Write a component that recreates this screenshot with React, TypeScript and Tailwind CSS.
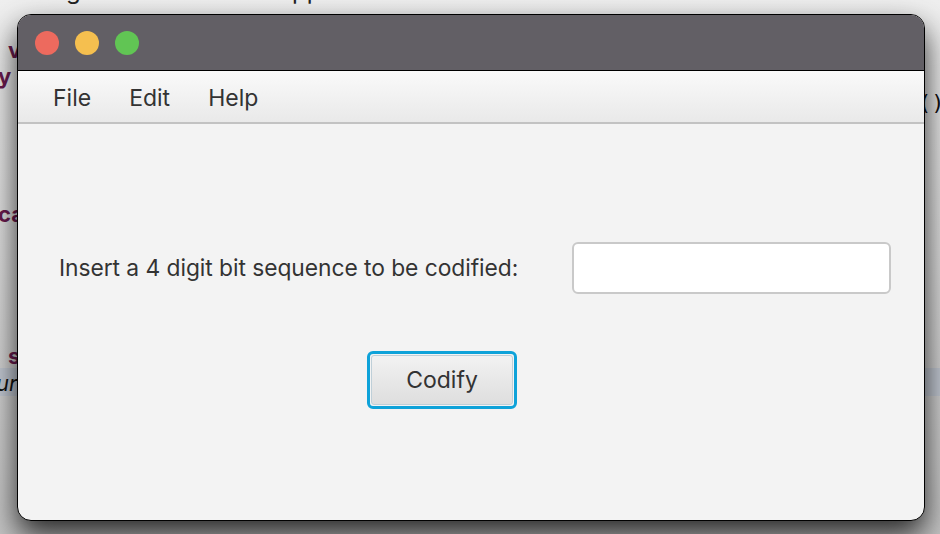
import React from 'react';

const font = { fontFamily: 'Inter, "Noto Sans", sans-serif' };

export default function App() {
  return (
    <div
      className="relative w-[940px] h-[534px] overflow-hidden bg-gradient-to-b from-[#efefef] via-[#dcdcdc] to-[#c4c4c4]"
      style={font}
    >
      {/* Text of the window behind */}
      <div className="absolute left-[66px] top-[-24px] text-[24px] leading-[30px] text-[#222]">g</div>
      <div className="absolute left-[292px] top-[-24px] text-[24px] leading-[30px] text-[#222]">pp</div>
      <div className="absolute left-[8px] top-[34px] text-[22px] font-bold text-[#6a1a4e]">v</div>
      <div className="absolute left-[-2px] top-[60px] text-[22px] font-bold text-[#6a1a4e]">y</div>
      <div className="absolute left-[-2px] top-[198px] text-[22px] font-bold text-[#6a1a4e]">ca</div>
      <div className="absolute left-[8px] top-[340px] text-[22px] font-bold text-[#6a1a4e]">s</div>
      <div className="absolute left-0 top-[368px] w-[940px] h-[28px] bg-[#c3c9d3]" />
      <div className="absolute left-[-4px] top-[367px] text-[22px] italic text-[#111]">ur</div>
      <div className="absolute left-[918px] top-[86px] text-[22px] text-[#111]" style={{ fontFamily: '"DejaVu Sans Mono", monospace' }}>()</div>

      {/* App window */}
      <div className="absolute left-[17px] top-[14px] w-[908px] h-[507px] rounded-[14px] border border-black bg-[#f3f3f3] overflow-hidden flex flex-col shadow-[0_14px_30px_rgba(0,0,0,0.8)]">
        <div className="h-[56px] bg-[#625f65] border-b border-black flex items-center gap-[16px] pl-[17px] shrink-0">
          <span className="w-[24px] h-[24px] rounded-full bg-[#ed6a5e]" />
          <span className="w-[24px] h-[24px] rounded-full bg-[#f5bf4f]" />
          <span className="w-[24px] h-[24px] rounded-full bg-[#61c554]" />
        </div>
        <div className="h-[53px] bg-gradient-to-b from-[#fafafa] to-[#e9e9e9] border-b-2 border-[#c2c2c2] flex items-center gap-[38px] pl-[35px] pt-[4px] text-[23px] text-[#333] shrink-0">
          <span>File</span>
          <span>Edit</span>
          <span>Help</span>
        </div>
        <div className="flex-1 flex flex-col">
          <div className="flex items-center mt-[118px] pl-[41px]">
            <span className="text-[22.8px] tracking-[-0.05px] text-[#333] w-[513px]">Insert a 4 digit bit sequence to be codified:</span>
            <input
              className="w-[319px] h-[52px] bg-white border-2 border-[#c9c9c9] rounded-[6px] outline-none"
              readOnly
            />
          </div>
          <div className="mt-[57px] pl-[349px]">
            <button className="w-[150px] h-[58px] rounded-[6px] border-[3px] border-[#0ea2d9] p-[1px]">
              <span className="flex items-center justify-center w-full h-full rounded-[3px] border border-[#bfcfd8] bg-gradient-to-b from-[#f2f2f2] to-[#dedede] text-[23px] text-[#333]">
                Codify
              </span>
            </button>
          </div>
        </div>
      </div>
    </div>
  );
}
